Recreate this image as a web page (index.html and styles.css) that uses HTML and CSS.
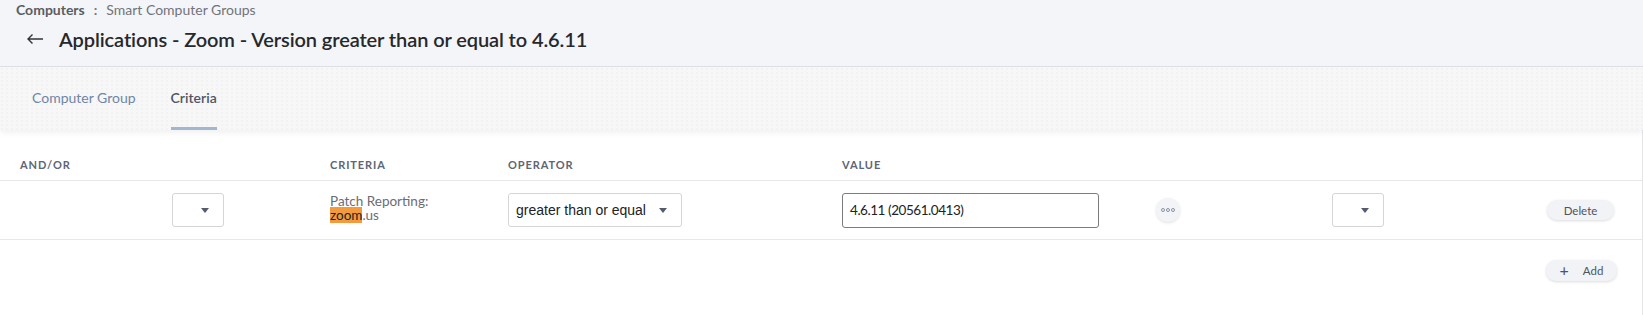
FILE: index.html
```html
<!DOCTYPE html>
<html>
<head>
<meta charset="utf-8">
<link rel="stylesheet" href="styles.css">
</head>
<body>
<header class="page-header">
  <div class="breadcrumb"><span class="crumb-root">Computers</span><span class="crumb-sep">:</span><span class="crumb-leaf">Smart Computer Groups</span></div>
  <div class="title-row">
    <svg class="back" width="18" height="12" viewBox="0 0 18 12"><path d="M17 6H2M6.5 1.5L2 6l4.5 4.5" fill="none" stroke="#333" stroke-width="1.4"/></svg>
    <h1 class="title">Applications - Zoom - Version greater than or equal to 4.6.11</h1>
  </div>
</header>
<nav class="tabs">
  <div class="tab">Computer Group</div>
  <div class="tab active">Criteria</div>
</nav>
<main class="content">
  <div class="grid">
    <div class="th">AND/OR</div>
    <div class="th"></div>
    <div class="th">CRITERIA</div>
    <div class="th">OPERATOR</div>
    <div class="th">VALUE</div>
    <div class="th"></div>
    <div class="th"></div>
    <div class="th"></div>

    <div class="td"></div>
    <div class="td"><div class="select small"><span class="caret"></span></div></div>
    <div class="td criteria">Patch Reporting:<br><mark class="hl">zoom</mark>.us</div>
    <div class="td"><div class="select op"><span>greater than or equal</span><span class="caret"></span></div></div>
    <div class="td"><div class="input">4.6.11 (20561.0413)</div></div>
    <div class="td"><div class="dots"><i></i><i></i><i></i></div></div>
    <div class="td"><div class="select small"><span class="caret"></span></div></div>
    <div class="td"><div class="pill">Delete</div></div>
  </div>
  <div class="actions">
    <div class="pill add"><span class="plus">+</span>Add</div>
  </div>
</main>
</body>
</html>
```
FILE: styles.css
```css
html, body { margin: 0; padding: 0; background: #fff; }
body { font-family: Lato, "Open Sans", sans-serif; color: #333; width: 1643px; height: 315px; overflow: hidden; }

.page-header { background: #f4f5f8; height: 66px; border-bottom: 1px solid #dde0e6; }
.breadcrumb { padding: 1px 0 0 16px; font-size: 14px; line-height: 18px; height: 19px; }
.crumb-root { font-weight: 700; color: #5a5d63; }
.crumb-sep { color: #777; margin: 0 9px 0 9px; font-weight: 700; }
.crumb-leaf { color: #70747b; }
.title-row { display: flex; align-items: center; height: 37px; padding-left: 26px; }
.back { margin-right: 15px; }
.title { margin: 0; font-size: 20px; font-weight: 600; color: #26282c; letter-spacing: -0.1px; }

.tabs { display: flex; height: 63px; background-color: #f7f7f7;
  background-image: radial-gradient(circle at 2px 2px, #f2f2f2 1px, transparent 1.5px);
  background-size: 5px 4px; padding-left: 32px; gap: 35px; position: relative; box-shadow: 0 3px 6px rgba(0,0,0,0.06); }
.tab { display: flex; align-items: center; font-size: 14px; color: #6f86a5; border-bottom: 3px solid transparent; box-sizing: border-box; height: 63px; }
.tab.active { color: #4e5566; font-weight: 600; border-bottom-color: #a2b6cf; }

.content { border-right: 1px solid #e2e4e8; height: 185px; }
.grid { display: grid; grid-template-columns: 152px 158px 178px 334px 314px 176px 215px 1fr; padding-left: 20px; }
.th { height: 51px; box-sizing: border-box; padding-top: 28px; font-size: 11px; font-weight: 700; letter-spacing: 0.9px; color: #5d6576; border-bottom: 1px solid #e6e7ea; }
.td { height: 59px; box-sizing: border-box; display: flex; align-items: center; border-bottom: 1px solid #e6e7ea; }
.grid > .th:first-child, .grid > .td:nth-child(9) { margin-left: -20px; padding-left: 20px; }

.select { height: 34px; box-sizing: border-box; border: 1px solid #d3d5d9; border-radius: 3px; display: flex; align-items: center; justify-content: flex-end; padding-right: 14px; background: #fff; }
.select.small { width: 52px; }
.select.op { width: 174px; justify-content: space-between; padding-left: 7px; font-size: 14px; color: #222; font-family: "Liberation Sans", Arial, sans-serif; }
.caret { width: 0; height: 0; border-left: 4px solid transparent; border-right: 4px solid transparent; border-top: 5px solid #555b6b; }

.criteria { display: block; padding-top: 13px; font-size: 13.5px; line-height: 14px; color: #6a6d73; }
.hl { background: #f39a3c; color: #222; padding: 0; }

.input { width: 257px; height: 35px; box-sizing: border-box; border: 1px solid #7a7c80; border-radius: 3px; display: flex; align-items: center; padding-left: 7px; font-size: 13.5px; letter-spacing: -0.45px; color: #222; font-family: Lato, sans-serif; }

.dots { width: 24px; height: 24px; border-radius: 50%; background: #f3f4f7; box-shadow: 0 1px 3px rgba(0,0,0,0.12); display: flex; align-items: center; justify-content: center; gap: 1px; }
.dots i { width: 4px; height: 4px; border: 1px solid #8a90a6; border-radius: 50%; box-sizing: border-box; }

.pill { height: 20px; border-radius: 10px; background: #f2f3f6; box-shadow: 0 1px 3px rgba(0,0,0,0.14); font-size: 11.5px; color: #4f535c; display: flex; align-items: center; justify-content: center; width: 67px; }
.actions { display: flex; justify-content: flex-end; padding: 20px 25px 0 0; }
.pill.add { width: 71px; height: 21px; gap: 14px; }
.plus { font-size: 16px; font-weight: 400; line-height: 1; margin-top: -2px; }
```
